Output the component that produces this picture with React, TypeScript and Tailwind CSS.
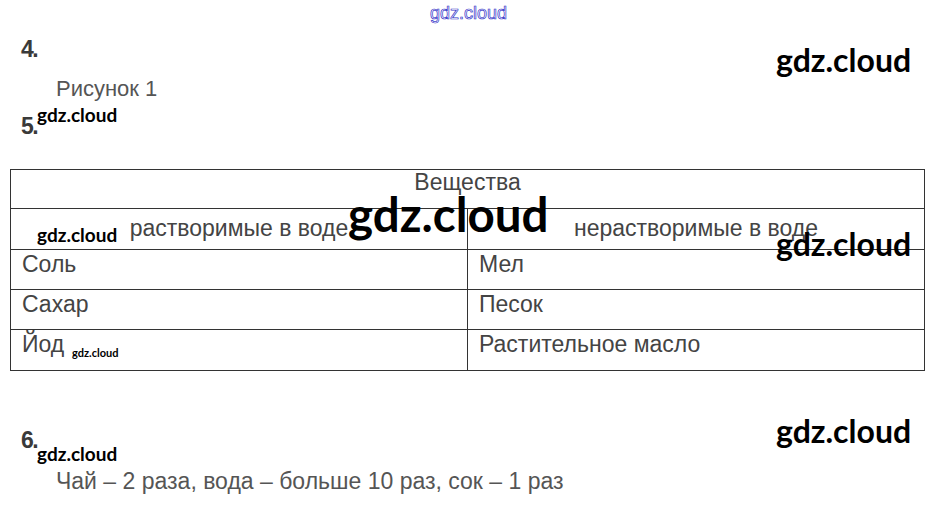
import React from "react";

const body = { fontFamily: '"Liberation Sans", Arial, sans-serif' };
const wm = { fontFamily: 'Lato, "Open Sans", sans-serif' };

function Mark({ className }: { className: string }) {
  return (
    <div className={"absolute font-bold text-black leading-none whitespace-nowrap " + className} style={wm}>
      gdz.cloud
    </div>
  );
}

const rows: [string, string][] = [
  ["Соль", "Мел"],
  ["Сахар", "Песок"],
  ["Йод", "Растительное масло"],
];

export default function App() {
  const cell = "text-[23px] leading-[24px] text-[#444]";
  const num = "pl-[21px] text-[23px] leading-[24px] font-bold text-[#3a3a3a] tracking-[-1.5px]";
  return (
    <div className="relative w-[937px] h-[512px] bg-white overflow-hidden" style={body}>
      <div className="pt-[37px] flex flex-col">
        <div className={num}>4.</div>
        <div className="mt-[16px] pl-[56px] text-[22px] leading-[24px] text-[#555]">Рисунок 1</div>
        <div className={"mt-[13px] " + num}>5.</div>

        <div className="mt-[31px] ml-[10px] w-[915px] border border-[#333] flex flex-col">
          <div className={"h-[39px] text-center border-b border-[#333] " + cell}>Вещества</div>
          <div className="h-[41px] grid grid-cols-[457px_1fr] border-b border-[#333]">
            <div className={"pt-[7px] text-center border-r border-[#333] " + cell}>растворимые в воде</div>
            <div className={"pt-[7px] text-center " + cell}>нерастворимые в воде</div>
          </div>
          {rows.map(([a, b], i) => (
            <div
              key={i}
              className={"h-[40px] grid grid-cols-[457px_1fr] " + (i < 2 ? "border-b border-[#333]" : "")}
            >
              <div className={"pt-[2px] pl-[11px] border-r border-[#333] " + cell}>{a}</div>
              <div className={"pt-[2px] pl-[11px] " + cell}>{b}</div>
            </div>
          ))}
        </div>

        <div className={"mt-[57px] " + num}>6.</div>
        <div className="mt-[16px] pl-[56px] text-[23px] leading-[26px] text-[#555]">
          Чай – 2 раза, вода – больше 10 раз, сок – 1 раз
        </div>
      </div>

      <div
        className="absolute left-[430px] top-[2px] text-[18px] leading-[22px] text-white [-webkit-text-stroke:0.7px_#3232c8]"
        style={body}
      >
        gdz.cloud
      </div>

      <Mark className="left-[776px] top-[44px] text-[32px]" />
      <Mark className="left-[37px] top-[105px] text-[19px]" />
      <Mark className="left-[348px] top-[190px] text-[47.5px]" />
      <Mark className="left-[37px] top-[225px] text-[19px]" />
      <Mark className="left-[776px] top-[228px] text-[32px]" />
      <Mark className="left-[72px] top-[347px] text-[11px]" />
      <Mark className="left-[776px] top-[415px] text-[32px]" />
      <Mark className="left-[37px] top-[444px] text-[19px]" />
    </div>
  );
}
